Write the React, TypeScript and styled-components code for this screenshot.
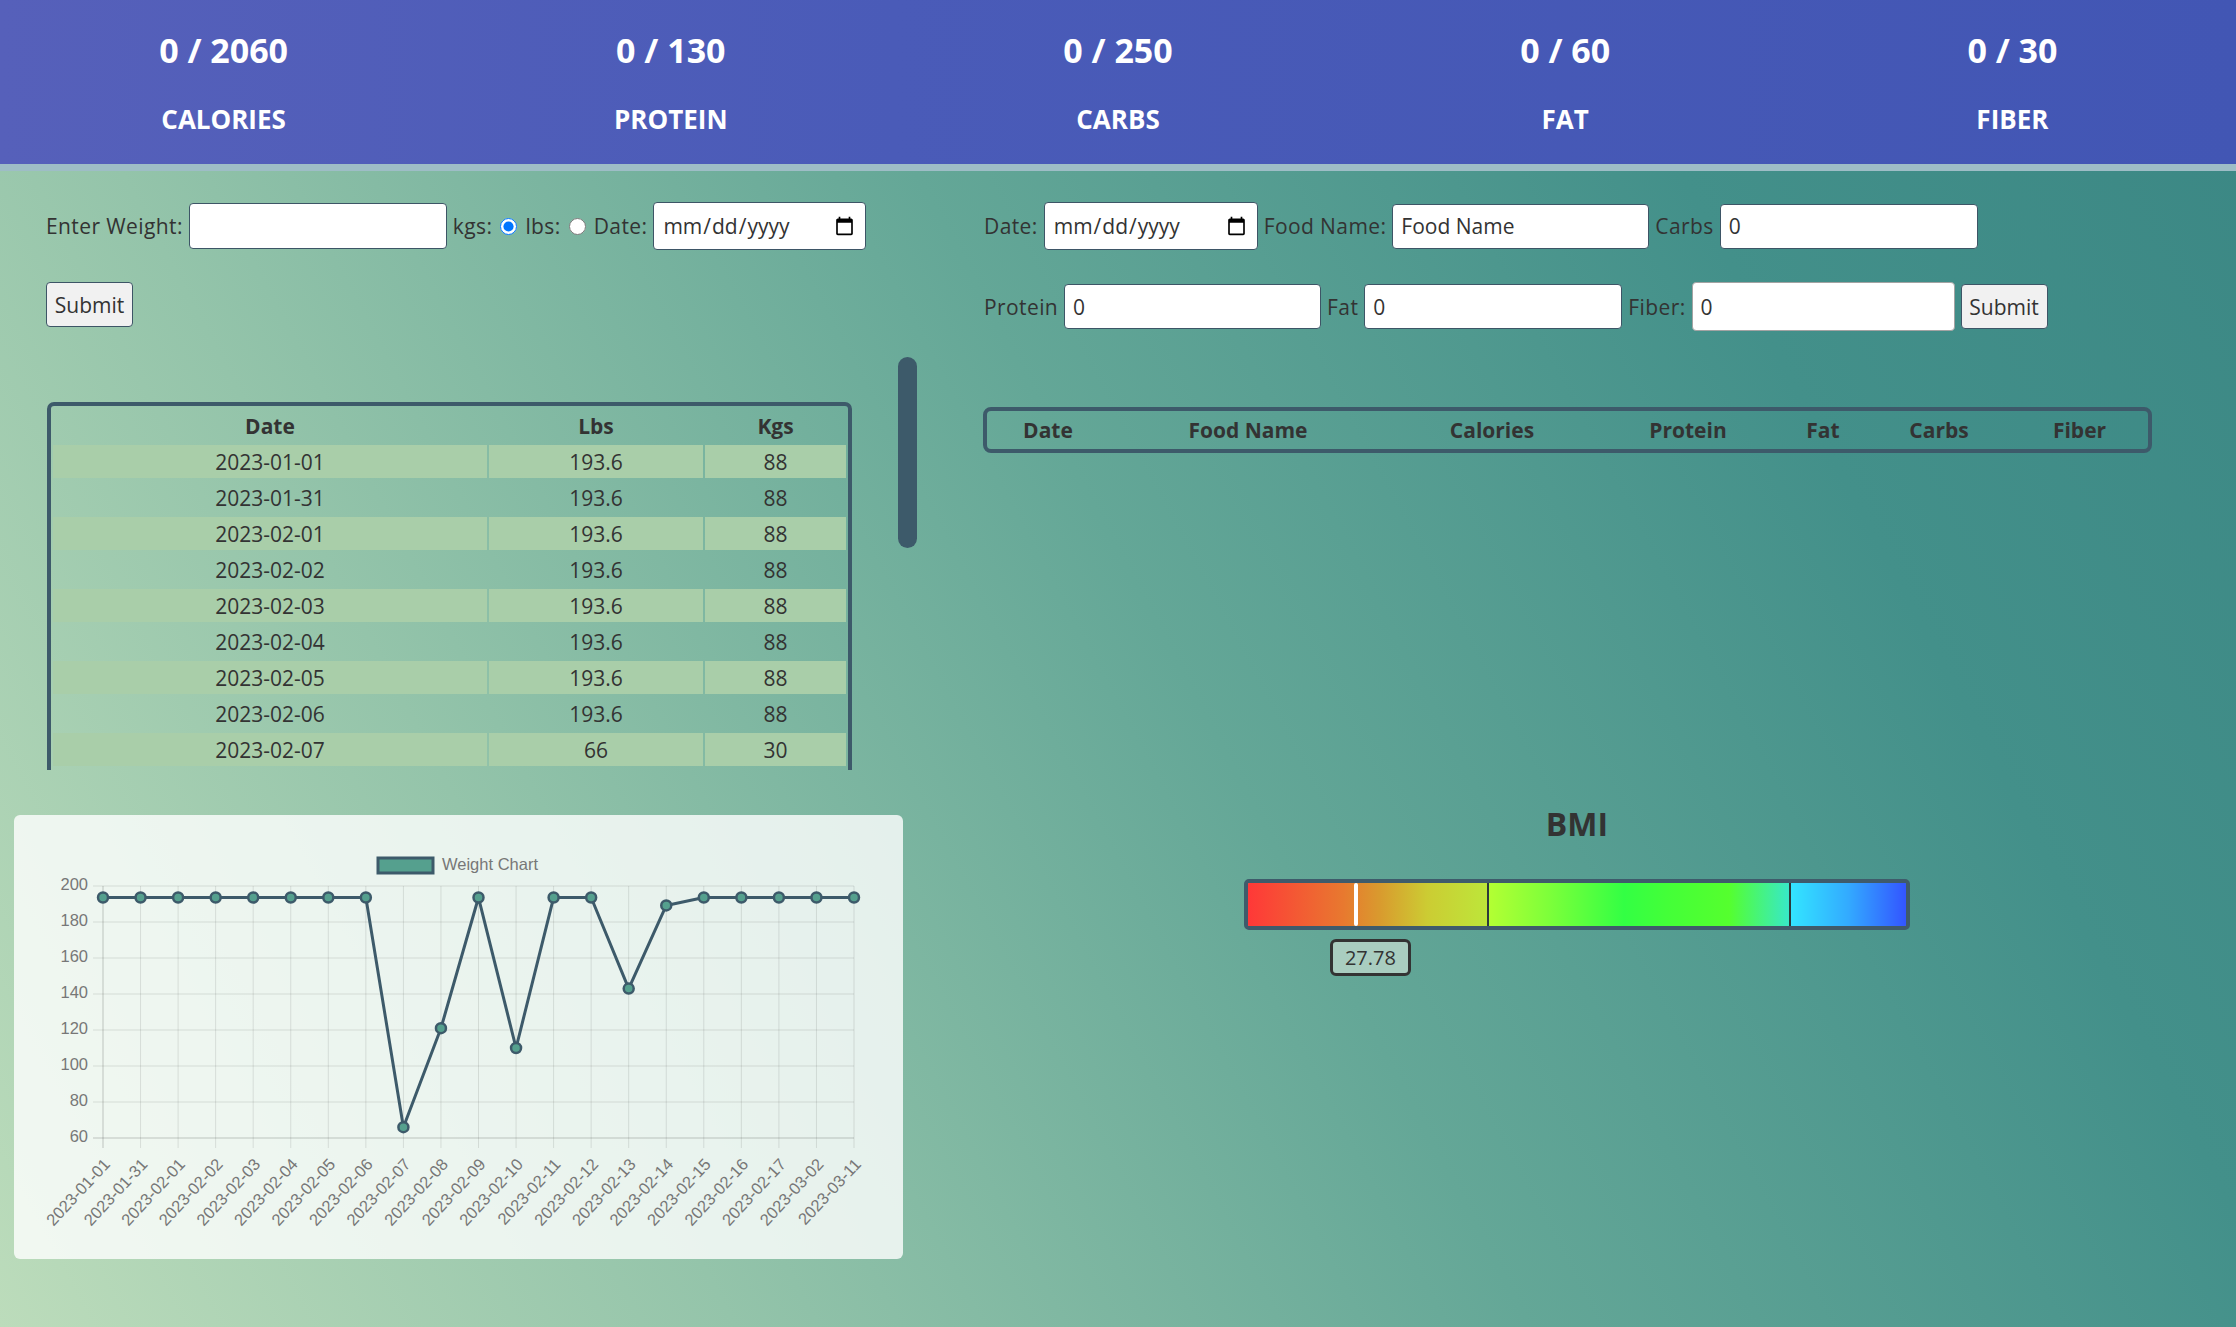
import React from 'react';
import styled, { createGlobalStyle } from 'styled-components';

const GlobalStyle = createGlobalStyle`
  html, body { margin: 0; padding: 0; }
  body { font-family: "Open Sans", "Noto Sans", sans-serif; color: #333; }
  * { box-sizing: border-box; }
`;

const Page = styled.div`
  min-height: 100vh;
  background: linear-gradient(62deg, #bcdcbb 0%, #94c4aa 25%, #64a797 52%, #43908a 78%, #3b8784 100%);
`;

const Header = styled.header`
  display: grid;
  grid-template-columns: repeat(5, 1fr);
  height: 171px;
  background: linear-gradient(90deg, #5660ba 0%, #4a5bb8 40%, #4256b4 100%);
  border-bottom: 7px solid #9ebdc6;
`;

const Stat = styled.div`
  display: flex;
  flex-direction: column;
  align-items: center;
  justify-content: center;
  gap: 33px;
  color: #fff;
  font-weight: 700;
`;

const StatValue = styled.div`
  font-size: 34px;
  line-height: 41px;
`;

const StatLabel = styled.div`
  font-size: 26px;
  line-height: 31px;
`;

const Main = styled.main`
  display: grid;
  grid-template-columns: 918px 1fr;
  padding-top: 31px;
`;

const Column = styled.section`
  display: flex;
  flex-direction: column;
`;

const Form = styled.form<{ $pad: number }>`
  display: flex;
  flex-direction: column;
  align-items: flex-start;
  gap: 32px;
  padding-left: ${(p) => p.$pad}px;
`;

const FormRow = styled.div`
  display: flex;
  align-items: center;
  gap: 6px;
  min-height: 48px;
`;

const Label = styled.label`
  font-size: 21px;
  letter-spacing: 0.4px;
  color: #333;
  white-space: nowrap;
`;

const TextInput = styled.input<{ $w?: number; $h?: number; $plain?: boolean }>`
  width: ${(p) => p.$w ?? 258}px;
  height: ${(p) => p.$h ?? 45}px;
  border: ${(p) => (p.$plain ? '1.5px solid #a3a3a3' : '1.5px solid #3d5566')};
  border-radius: 4px;
  padding: 0 8px;
  font-family: inherit;
  font-size: 21px;
  color: #333;
  background: #fff;
  outline: none;
`;

const Radio = styled.input`
  width: 17px;
  height: 17px;
  margin: 0 2px;
`;

const SubmitButton = styled.button`
  height: 45px;
  width: 87px;
  padding: 0;
  border: 1px solid #3d5566;
  border-radius: 4px;
  background: #f1f1f1;
  font-family: inherit;
  font-size: 21px;
  color: #333;
`;

const ScrollArea = styled.div`
  margin-top: 30px;
  height: 413px;
  display: flex;
`;

const ScrollViewport = styled.div`
  flex: 1;
  overflow-y: auto;
  scrollbar-width: none;
  padding: 45px 46px 0 47px;
  &::-webkit-scrollbar { display: none; }
`;

const ScrollTrack = styled.div`
  width: 20px;
  padding-right: 1px;
  display: flex;
  flex-direction: column;
`;

const ScrollThumb = styled.div`
  height: 191px;
  border-radius: 10px;
  background: #3d5a6a;
`;

const WeightTable = styled.table`
  width: 100%;
  border: 4px solid #3d5a6a;
  border-radius: 7px;
  border-spacing: 2px 3px;
  font-size: 21px;
  color: #333;
`;

const HeadCell = styled.th<{ $w: number; $h?: number }>`
  width: ${(p) => p.$w}px;
  height: ${(p) => p.$h ?? 33}px;
  padding: 0;
  font-weight: 700;
  text-align: center;
`;

const Cell = styled.td<{ $shade: boolean }>`
  height: 33px;
  padding: 0;
  text-align: center;
  background: ${(p) => (p.$shade ? '#a9cea9' : 'transparent')};
`;

const ChartCard = styled.div`
  margin: 45px 15px 0 14px;
  height: 444px;
  border-radius: 6px;
  background: rgba(255, 255, 255, 0.8);
`;

const FoodTable = styled.table`
  margin: 76px 0 0 65px;
  width: 1169px;
  border: 4px solid #3d5a6a;
  border-radius: 8px;
  border-spacing: 0;
  font-size: 21px;
  color: #333;
`;

const BmiSection = styled.div`
  margin-top: 351px;
  display: flex;
  flex-direction: column;
  align-items: center;
`;

const BmiTitle = styled.h2`
  margin: 0;
  font-size: 32px;
  line-height: 40px;
  font-weight: 700;
  color: #333;
`;

const BmiScale = styled.div`
  margin-top: 35px;
  width: 666px;
  display: flex;
  flex-direction: column;
  gap: 9px;
`;

const BmiBar = styled.div`
  position: relative;
  height: 51px;
  border: 4px solid #3f5b6b;
  border-radius: 5px;
  display: flex;
  overflow: hidden;
`;

const BmiSegment = styled.div<{ $grow: number; $bg: string; $divider?: boolean }>`
  flex: ${(p) => p.$grow} 1 0;
  background: ${(p) => p.$bg};
  border-left: ${(p) => (p.$divider ? '2px solid #2e3a3a' : 'none')};
`;

const BmiMarker = styled.div`
  position: absolute;
  top: 0;
  bottom: 0;
  width: 4px;
  border-radius: 2px;
  background: #fff;
`;

const BmiValue = styled.div`
  width: 81px;
  height: 37px;
  border: 3px solid #333;
  border-radius: 6px;
  background: #a9cdc0;
  display: flex;
  align-items: center;
  justify-content: center;
  font-size: 20px;
  color: #333;
`;

const weights: { date: string; lbs: string; kgs: string; v: number }[] = [
  ['2023-01-01', '193.6', '88'],
  ['2023-01-31', '193.6', '88'],
  ['2023-02-01', '193.6', '88'],
  ['2023-02-02', '193.6', '88'],
  ['2023-02-03', '193.6', '88'],
  ['2023-02-04', '193.6', '88'],
  ['2023-02-05', '193.6', '88'],
  ['2023-02-06', '193.6', '88'],
  ['2023-02-07', '66', '30'],
  ['2023-02-08', '121', '55'],
  ['2023-02-09', '193.6', '88'],
  ['2023-02-10', '110', '50'],
  ['2023-02-11', '193.6', '88'],
  ['2023-02-12', '193.6', '88'],
  ['2023-02-13', '143', '65'],
  ['2023-02-14', '189.2', '86'],
  ['2023-02-15', '193.6', '88'],
  ['2023-02-16', '193.6', '88'],
  ['2023-02-17', '193.6', '88'],
  ['2023-03-02', '193.6', '88'],
  ['2023-03-11', '193.6', '88'],
].map(([date, lbs, kgs]) => ({ date, lbs, kgs, v: parseFloat(lbs) }));

const stats = [
  ['0 / 2060', 'CALORIES'],
  ['0 / 130', 'PROTEIN'],
  ['0 / 250', 'CARBS'],
  ['0 / 60', 'FAT'],
  ['0 / 30', 'FIBER'],
];

const foodCols: [string, number][] = [
  ['Date', 122],
  ['Food Name', 278],
  ['Calories', 210],
  ['Protein', 182],
  ['Fat', 88],
  ['Carbs', 144],
  ['Fiber', 137],
];

function WeightChart() {
  const W = 889;
  const H = 444;
  const left = 89;
  const right = 840;
  const top = 71;
  const bottom = 323;
  const step = (right - left) / (weights.length - 1);
  const y = (v: number) => top + ((200 - v) / 140) * (bottom - top);
  const ticks = [200, 180, 160, 140, 120, 100, 80, 60];
  const pts = weights.map((w, i) => [left + i * step, y(w.v)]);
  const font = '"Liberation Sans", Arial, sans-serif';
  return (
    <svg width={W} height={H} viewBox={`0 0 ${W} ${H}`}>
      <rect x={364} y={43} width={55} height={15} fill="#55a08e" stroke="#3d5a6a" strokeWidth={3} />
      <text x={428} y={51} dominantBaseline="middle" fontFamily={font} fontSize={16.5} fill="#777">
        Weight Chart
      </text>
      {ticks.map((t) => (
        <g key={t}>
          <line x1={left - 10} x2={right} y1={y(t)} y2={y(t)} stroke="rgba(0,0,0,0.1)" strokeWidth={t === 60 ? 2 : 1} />
          <text x={74} y={y(t)} textAnchor="end" dominantBaseline="middle" fontFamily={font} fontSize={16.5} fill="#777">
            {t}
          </text>
        </g>
      ))}
      {weights.map((w, i) => {
        const x = left + i * step;
        return (
          <g key={w.date}>
            <line x1={x} x2={x} y1={top} y2={bottom + 10} stroke="rgba(0,0,0,0.1)" strokeWidth={i === 0 ? 2 : 1} />
            <text
              transform={`translate(${x + 8} ${bottom + 27}) rotate(-47)`}
              textAnchor="end"
              fontFamily={font}
              fontSize={16.5}
              fill="#777"
            >
              {w.date}
            </text>
          </g>
        );
      })}
      <polyline
        points={pts.map((p) => p.join(',')).join(' ')}
        fill="none"
        stroke="#3d5a6a"
        strokeWidth={3}
        strokeLinejoin="round"
      />
      {pts.map((p, i) => (
        <circle key={i} cx={p[0]} cy={p[1]} r={5} fill="#55a08e" stroke="#3d5a6a" strokeWidth={2.5} />
      ))}
    </svg>
  );
}

export default function App() {
  const bmiFraction = 0.161;
  const innerWidth = 658;
  return (
    <Page>
      <GlobalStyle />
      <Header>
        {stats.map(([v, l]) => (
          <Stat key={l}>
            <StatValue>{v}</StatValue>
            <StatLabel>{l}</StatLabel>
          </Stat>
        ))}
      </Header>
      <Main>
        <Column>
          <Form $pad={46} onSubmit={(e) => e.preventDefault()}>
            <FormRow>
              <Label>Enter Weight:</Label>
              <TextInput type="text" $w={258} $h={46} />
              <Label>kgs:</Label>
              <Radio type="radio" name="unit" defaultChecked />
              <Label>lbs:</Label>
              <Radio type="radio" name="unit" />
              <Label>Date:</Label>
              <TextInput type="date" $w={213} $h={48} />
            </FormRow>
            <SubmitButton type="submit">Submit</SubmitButton>
          </Form>
          <ScrollArea>
            <ScrollViewport>
              <WeightTable>
                <thead>
                  <tr>
                    <HeadCell $w={434}>Date</HeadCell>
                    <HeadCell $w={214}>Lbs</HeadCell>
                    <HeadCell $w={141}>Kgs</HeadCell>
                  </tr>
                </thead>
                <tbody>
                  {weights.map((w, i) => (
                    <tr key={w.date}>
                      <Cell $shade={i % 2 === 0}>{w.date}</Cell>
                      <Cell $shade={i % 2 === 0}>{w.lbs}</Cell>
                      <Cell $shade={i % 2 === 0}>{w.kgs}</Cell>
                    </tr>
                  ))}
                </tbody>
              </WeightTable>
            </ScrollViewport>
            <ScrollTrack>
              <ScrollThumb />
            </ScrollTrack>
          </ScrollArea>
          <ChartCard>
            <WeightChart />
          </ChartCard>
        </Column>
        <Column>
          <Form $pad={66} onSubmit={(e) => e.preventDefault()}>
            <FormRow>
              <Label>Date:</Label>
              <TextInput type="date" $w={214} $h={48} />
              <Label>Food Name:</Label>
              <TextInput type="text" defaultValue="Food Name" $w={257} />
              <Label>Carbs</Label>
              <TextInput type="text" defaultValue="0" $w={258} />
            </FormRow>
            <FormRow>
              <Label>Protein</Label>
              <TextInput type="text" defaultValue="0" $w={257} />
              <Label>Fat</Label>
              <TextInput type="text" defaultValue="0" $w={258} />
              <Label>Fiber:</Label>
              <TextInput type="text" defaultValue="0" $w={263} $h={49} $plain />
              <SubmitButton type="submit">Submit</SubmitButton>
            </FormRow>
          </Form>
          <FoodTable>
            <thead>
              <tr>
                {foodCols.map(([c, w]) => (
                  <HeadCell key={c} $w={w} $h={38}>
                    {c}
                  </HeadCell>
                ))}
              </tr>
            </thead>
          </FoodTable>
          <BmiSection>
            <BmiTitle>BMI</BmiTitle>
            <BmiScale>
              <BmiBar>
                <BmiSegment $grow={240} $bg="linear-gradient(90deg, #ff3838 0%, #e8792f 40%, #d99a2e 55%, #cccc33 75%, #bde63a 100%)" />
                <BmiSegment $grow={302} $divider $bg="linear-gradient(90deg, #b3ff33 0%, #7dff3a 20%, #33ff44 45%, #44ff38 60%, #55ff2e 80%, #38e8c8 100%)" />
                <BmiSegment $grow={116} $divider $bg="linear-gradient(90deg, #33e5ff 0%, #33aaff 50%, #3355ff 100%)" />
                <BmiMarker style={{ left: bmiFraction * innerWidth }} />
              </BmiBar>
              <BmiValue style={{ marginLeft: bmiFraction * innerWidth - 20 }}>27.78</BmiValue>
            </BmiScale>
          </BmiSection>
        </Column>
      </Main>
    </Page>
  );
}
